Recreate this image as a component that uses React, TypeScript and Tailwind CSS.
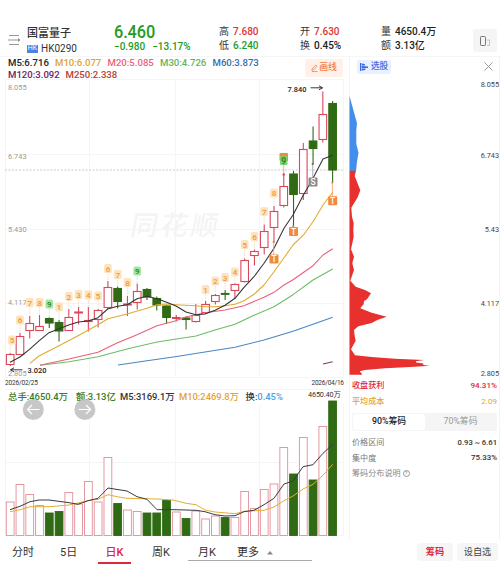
import { X } from "lucide-react";

type Candle = [high: number, top: number, bottom: number, low: number, down?: 1];

const candles: Candle[] = [
  [353, 354.5, 364.5, 366],
  [333, 336.5, 354.5, 355],
  [316, 323.5, 330.5, 338.5],
  [315, 326.5, 330.5, 331],
  [317.5, 318.5, 323, 328, 1],
  [320, 322.5, 331, 341.5, 1],
  [309, 317.5, 330.5, 331],
  [307, 312, 313, 324.5],
  [307, 320.5, 321.5, 331.5],
  [309, 310.5, 319.5, 327.5],
  [281, 287.5, 307.5, 309],
  [286.5, 288.5, 301.5, 308.5, 1],
  [296, 304, 305, 316],
  [283.5, 291.5, 302.5, 309.5],
  [288, 289.5, 297, 300, 1],
  [296.5, 298.5, 305, 310.5, 1],
  [305.5, 306, 317.5, 324, 1],
  [315, 317.5, 318.5, 321.5],
  [316.5, 318, 319.5, 329.5, 1],
  [304, 315.5, 321.5, 322.5],
  [301, 304.5, 312.5, 314],
  [294, 295.5, 301.5, 304.5],
  [290, 293.5, 294.3, 300, 1],
  [283.5, 284.5, 290.5, 298.5],
  [258.5, 260.5, 281.5, 282.5],
  [249.5, 251.5, 255.5, 265.5],
  [224.5, 231.5, 247.5, 254.5],
  [206, 211.5, 227.5, 242],
  [174, 186.5, 205.5, 207.5],
  [171, 174, 194.5, 226.5, 1],
  [143, 149.5, 193.5, 200],
  [126.5, 141, 148.5, 164, 1],
  [91.5, 114.5, 139.5, 142.5],
  [101, 103.5, 170, 182.5, 1],
];

const volumeTops = [
  502, 484.5, 494.5, 505.5, 513, 511.5, 492.5, 504, 481.5, 502, 457.5, 503.5,
  510, 511.5, 513, 513, 500.5, 512, 518.5, 511, 519, 516, 517.5, 517.5, 491.5,
  508.5, 489.5, 484, 447.5, 474, 437.5, 480, 426.5, 401,
];

const markers: { i: number; y: number; n: string; green?: boolean; x?: number }[] = [
  { i: 0, y: 340, n: "5", x: 12 },
  { i: 1, y: 320, n: "6" },
  { i: 2, y: 302.5, n: "7" },
  { i: 3, y: 302.5, n: "8" },
  { i: 4, y: 304, n: "9", green: true },
  { i: 5, y: 307, n: "1" },
  { i: 6, y: 296.5, n: "2" },
  { i: 7, y: 294.5, n: "3" },
  { i: 8, y: 295, n: "4" },
  { i: 9, y: 296, n: "5" },
  { i: 10, y: 268.5, n: "6" },
  { i: 11, y: 274.5, n: "7" },
  { i: 12, y: 282.5, n: "8" },
  { i: 13, y: 271, n: "9", green: true },
  { i: 20, y: 289.5, n: "1" },
  { i: 21, y: 281, n: "2" },
  { i: 22, y: 277.5, n: "3" },
  { i: 23, y: 272, n: "4" },
  { i: 24, y: 244.5, n: "5" },
  { i: 25, y: 236.5, n: "6" },
  { i: 26, y: 211.5, n: "7" },
  { i: 27, y: 193, n: "8" },
];

const trades = [
  { x: 274, y: 259, t: "T", from: 242 },
  { x: 293.5, y: 231.5, t: "T", from: 226 },
  { x: 332.7, y: 200.7, t: "T", from: 182.5 },
  { x: 313, y: 182, t: "S", from: 164 },
];

const averages = [
  { color: "#4a86c4", points: "118,365 147,360.7 175,356.7 205,352 235,347.3 264,340 293,331.3 313,324.3 332.7,317.3" },
  { color: "#6bbd62", points: "40,365.3 69,361.7 98,356.7 127,349 157,342 175,339.3 196,336 215,330 235,324.3 254,315.3 274,306.7 293,294.7 313,280 332.7,269" },
  { color: "#e8607a", points: "40,365.3 69,359 98,352.3 117,343 137,334.7 157,325.7 175,321 186,317 205,312.7 225,310 244,305.7 264,297.3 274,292.3 284,285 293,279.7 313,265.7 323,255 332.7,248.7" },
  { color: "#e0a92e", points: "30,363.3 39,356 59,345.7 78,335.7 98,324.7 108,318.7 127,314 147,308.3 157,304.7 166,304 176,304.7 196,305.7 205,306.7 215,306.7 225,305.7 235,304.3 244,300.7 254,294.3 264,285 274,271.7 284,257.7 293,245 304,234.3 313,221.7 323,205 332.7,192.3" },
  { color: "#333333", points: "10,362.3 20,357 29.5,349.3 39.3,340.7 49,332.7 59,328.7 68.7,325 78.3,322 88,321 98,317.7 107.7,309 117.5,306.3 127.3,304.7 137,298.7 147,296.3 157,298.7 166,302 176,306 186,312 196,314.7 205,314 215,310.3 225,305.3 235,298.3 244,287.3 254,276.7 264,263.3 274,248.3 284,228.3 293,215 303,195.7 313,178.3 323,159 332.7,155.3" },
  { color: "#7a3b62", points: "323,364 332.7,361.7" },
];

const volumeAverages = [
  { color: "#e5ad36", points: "10,511.7 20,509.7 30,506.7 49,506.7 69,505 88,500.7 98,499.3 108,494.7 117,496.7 127,498.3 157,499 173,500 186,503.3 196,504.7 205,510 215,512 235,513.7 244,511.3 264,510.3 274,507 284,500.7 293,496 303,489 313,484.3 323,475.3 332.7,464.3" },
  { color: "#3a3a44", points: "10,509.7 20,506.3 30,501.7 39,500 49,500 69,502.7 78,504.3 88,500.7 98,498.3 108,488 127,491 137,496.7 147,499.3 157,509.7 175,509.7 196,510.3 205,511.7 215,514.7 225,516 235,515.7 244,511.7 254,510.3 264,504.7 274,498.3 284,484 293,481 303,466.7 313,464.7 323,453.3 332.7,444.3" },
];

const legend = [
  { text: "M5:6.716", className: "w-[47px] text-[#222]" },
  { text: "M10:6.077", className: "w-[52.5px] text-[#e0a52f]" },
  { text: "M20:5.085", className: "w-[52.5px] text-[#ee5f7b]" },
  { text: "M30:4.726", className: "w-[52.5px] text-[#62b558]" },
  { text: "M60:3.873", className: "w-[52.5px] text-[#2f6fae]" },
  { text: "M120:3.092", className: "w-[57.5px] text-[#6c2263]" },
  { text: "M250:2.338", className: "w-[60px] text-[#b5402f]" },
];

const volumeLegend = [
  { label: "总手:", value: "4650.4万", className: "w-[68px] text-[#3d7a26]" },
  { label: "额:", value: "3.13亿", className: "w-[44px] text-[#3d7a26]" },
  { label: "M5:", value: "3169.1万", className: "w-[59px] text-[#333]" },
  { label: "M10:", value: "2469.8万", className: "w-[66.5px] text-[#e0a52f]" },
];

const gridX = [5.5, 89.5, 175.5, 259.5, 343.5];
const candleX = (i: number) => 10.2 + i * 9.77;

function Header() {
  return (
    <header className="flex h-[57px] border-b border-[#f6f6f6] pt-[24px] pl-[8px]">
      <svg width="13" height="12" viewBox="0 0 13 12" className="mt-[10px] shrink-0" fill="none" stroke="#8c8c8c">
        <path d="M1 1.5H11M0 6H10M1 10.5H11" strokeWidth="0.9" />
        <path d="M10 4L12.5 6L10 8Z" fill="#8c8c8c" stroke="none" />
      </svg>
      <div className="ml-[6px] w-[87px]">
        <div className="h-[17px] text-[11px] leading-[20px] font-medium text-[#333]">国富量子</div>
        <div className="flex h-[15px] items-center">
          <span className="mr-[3px] flex h-[8px] w-[11px] items-center justify-center bg-[#4584df] text-[7px] text-white">HK</span>
          <span className="text-[10px] text-[#333]">HK0290</span>
        </div>
      </div>
      <div className="w-[105px] text-[#259b24]">
        <div className="h-[15px] w-[50px] origin-center scale-y-115 text-[16.3px] leading-[16px] font-medium tracking-[-0.1px]">6.460</div>
        <div className="flex gap-[7px] pt-px text-[10px] leading-[14px] font-medium">
          <span>−0.980</span>
          <span>−13.17%</span>
        </div>
      </div>
      <Quote rows={[["高", "7.680", "text-[#e03535]"], ["低", "6.240", "text-[#259b24]"]]} className="w-[81px]" />
      <Quote rows={[["开", "7.630", "text-[#e03535]"], ["换", "0.45%", "text-[#222]"]]} className="w-[81px]" />
      <Quote rows={[["量", "4650.4万", "text-[#222]"], ["额", "3.13亿", "text-[#222]"]]} className="w-[92px]" />
      <button className="mt-[5px] flex h-[23px] w-[24px] shrink-0 items-center justify-center rounded-[3px] bg-[#f5f5f5]">
        <svg width="12" height="12" viewBox="0 0 12 12" fill="none" stroke="#777">
          <rect x="1.5" y="1.5" width="5" height="9" rx="0.8" />
          <path d="M8 5H10.5V10.5H8" stroke="#c5c5c5" />
        </svg>
      </button>
    </header>
  );
}

function Quote({ rows, className }: { rows: string[][]; className: string }) {
  return (
    <div className={`shrink-0 ${className}`}>
      {rows.map(([label, value, color]) => (
        <div key={label} className="flex h-[14.5px] items-center gap-[4px] text-[10px] font-medium whitespace-nowrap">
          <span className="font-normal text-[#333]">{label}</span>
          <span className={color}>{value}</span>
        </div>
      ))}
    </div>
  );
}

function CandleChart() {
  return (
    <svg width="345" height="311" viewBox="0 79 345 311" className="block shrink-0">
      <g stroke="#f5f5f5" fill="none">
        {gridX.map((x) => <path key={x} d={`M${x} 79V377`} />)}
        {[79.5, 154.5, 229.5, 303.5, 377.5, 389.5].map((y) => <path key={y} d={`M5 ${y}H344`} />)}
      </g>
      <text x="130" y="235" fontSize="27" fontWeight="500" fill="#f4f4f4" textLength="87" transform="translate(41 0) skewX(-10)">同花顺</text>
      <path d="M5 170H344" stroke="#c4c4c4" strokeDasharray="2 1.5" strokeWidth="0.9" />
      <g fontSize="7.4" fill="#999">
        <text x="8" y="89.5">8.055</text>
        <text x="8" y="158.5">6.743</text>
        <text x="8" y="232">5.430</text>
        <text x="8" y="305">4.117</text>
        <text x="8" y="376">2.805</text>
      </g>

      {markers.map((m) => (
        <path key={m.i} d={`M${candleX(m.i)} ${m.y + 5}V${candles[m.i][0]}`} stroke={m.green ? "#b8e2b5" : "#eecfae"} strokeWidth="0.7" strokeDasharray="1.5 1" />
      ))}
      {candles.map(([high, top, bottom, low, down], i) => {
        const x = candleX(i);
        const color = down ? "#2f6b14" : "#d9475b";
        return (
          <g key={i} stroke={color} strokeWidth="1.1">
            <path d={`M${x} ${high}V${top}M${x} ${bottom}V${low}`} />
            <rect x={x - 3.8} y={top} width="7.6" height={bottom - top} fill={down ? color : "#fff"} />
          </g>
        );
      })}
      {averages.map((a) => (
        <polyline key={a.color} points={a.points} fill="none" stroke={a.color} strokeWidth="1.05" strokeLinejoin="round" />
      ))}

      <path d="M283.7 164V174" stroke="#e69a80" strokeWidth="0.8" />
      <circle cx="283.7" cy="174.5" r="1.2" fill="#d9475b" />
      <rect x="279.5" y="153" width="8.5" height="8" rx="1" fill="#ef8b45" />
      <rect x="280" y="156" width="7.5" height="9" rx="1" fill="#77cf68" fillOpacity="0.9" />
      <text x="283.7" y="163.5" fontSize="8.5" fontWeight="700" fill="#2e8a20" textAnchor="middle">9</text>
      {trades.map((t) => (
        <g key={t.x}>
          <path d={`M${t.x - 0.3} ${t.from}V${t.y - 4}`} stroke={t.t === "S" ? "#999" : "#ef9d5c"} strokeWidth="0.8" />
          <circle cx={t.x - 0.3} cy={t.from} r="1.1" fill={t.t === "S" ? "#666" : "#d6844a"} />
          <rect x={t.x - 4.5} y={t.y - 4.5} width="9" height="9" rx="1" fill={t.t === "S" ? "#8b8b8b" : "#f08a3e"} />
          <text x={t.x} y={t.y + 3} fontSize="8.5" fontWeight="500" fill="#fff" textAnchor="middle">{t.t}</text>
        </g>
      ))}
      {markers.map((m) => (
        <g key={m.i}>
          <rect x={(m.x ?? candleX(m.i)) - 3.8} y={m.y - 4.5} width="7.6" height="9" rx="1.5" fill={m.green ? "#a5e69f" : "#fee3bd"} />
          <text x={m.x ?? candleX(m.i)} y={m.y + 3} fontSize="8" fontWeight="500" fill={m.green ? "#26802b" : "#e89a3c"} textAnchor="middle">{m.n}</text>
        </g>
      ))}

      <g fill="none" stroke="#222" strokeWidth="0.9">
        <path d="M310.5 87.8H322.5M319 85.8L322.5 87.8L319 89.8" />
        <path d="M22.5 369.8H10.5M14 367.8L10.5 369.8L14 371.8" />
      </g>
      <g fontSize="7.4" fontWeight="500" fill="#222">
        <text x="287.5" y="92">7.840</text>
        <text x="27.5" y="372.5">3.020</text>
      </g>
      <g fontSize="6.5" fill="#333">
        <text x="5" y="385" textLength="33">2026/02/25</text>
        <text x="311.5" y="385" textLength="32.5">2026/04/16</text>
      </g>
    </svg>
  );
}

function VolumeChart() {
  return (
    <section className="h-[147px]">
      <div className="flex h-[14px] items-center pl-[8px] text-[9.4px] whitespace-nowrap">
        {volumeLegend.map((v) => (
          <span key={v.label} className={`shrink-0 font-medium ${v.className}`}>{v.label}{v.value}</span>
        ))}
        <span className="w-[62.5px] shrink-0 font-medium text-[#333]">换:<span className="text-[#4ba3dc]">0.45%</span></span>
        <span className="-mt-[4px] text-[7.3px] tracking-[-0.15px] text-[#333]">4650.40万</span>
      </div>
      <svg width="345" height="133" viewBox="0 404 345 133" className="block overflow-visible">
        <g stroke="#f5f5f5" fill="none">
          {gridX.map((x) => <path key={x} d={`M${x} 404V535`} />)}
          <path d="M5 462.5H344M5 535.5H344" />
        </g>
        {volumeTops.map((top, i) => {
          const down = candles[i][4];
          return (
            <rect
              key={i}
              x={candleX(i) - 3.9}
              y={top}
              width="7.8"
              height={535.5 - top}
              fill={down ? "#2f6b14" : "#fff"}
              stroke={down ? "#2f6b14" : "#e28e98"}
              strokeWidth="0.9"
            />
          );
        })}
        {volumeAverages.map((a) => (
          <polyline key={a.color} points={a.points} fill="none" stroke={a.color} strokeWidth="1" />
        ))}
        <g fill="none" stroke="#fff" strokeWidth="1.2">
          <circle cx="33.3" cy="409.5" r="10.5" fill="#bdbdbd" fillOpacity="0.85" stroke="none" />
          <circle cx="84.9" cy="409.5" r="10.5" fill="#bdbdbd" fillOpacity="0.85" stroke="none" />
          <path d="M39.5 409.5H27.5M32 405L27.5 409.5L32 414" />
          <path d="M78.5 409.5H90.5M86 405L90.5 409.5L86 414" />
        </g>
      </svg>
    </section>
  );
}

function ChipPanel() {
  return (
    <aside className="w-[151px] shrink-0 border-x border-[#f4f4f4] font-medium">
      <div className="flex h-[22px] items-center justify-between pr-[3px] pl-[7px]">
        <span className="-mt-[3px] flex h-[14px] w-[34px] items-center gap-[3px] rounded-[2px] bg-[#e9f0ff] pl-[3px] text-[8.6px] whitespace-nowrap text-[#3d68e0]">
          <svg width="8" height="8" viewBox="0 0 8 8" fill="#3d68e0" className="shrink-0">
            <path d="M0 0H1V8H0ZM1.5 0.2L5 1.2V2.5H1.5ZM1.5 2.9L8 3.4V5H1.5ZM1.5 5.4H5.5V6.7L1.5 7.7Z" />
          </svg>
          选股
        </span>
        <X className="-mt-[4px] size-[15px] text-[#888]" strokeWidth={1.3} />
      </div>
      <svg width="149" height="299" viewBox="350 79 149 299" className="block overflow-visible">
        <path d="M349.5 96L357 123.3L356.3 130V144L358.5 152.7L357 161.7L356 171H349.5Z" fill="#438eec" />
        <path
          d="M349.5 170.7H356L354.7 176L360.3 190.3L357.7 197.3L351.3 207.7L352 216.7L353.7 223.3L353.3 230L353.7 236.7L351 249.3L354 256.7L352.3 263.3L354 270L350.3 280.7L355.7 286.7L365 290L371 293.3L367 299.3L364 301L363.7 304L360.3 308.3L371.7 312.7L386.7 316.7L377.3 320L371.7 323L358.3 326.3L354 330L354.7 336L355.7 340.7L351 349.3L355 355.3L371.7 357L395 358.7L424.3 360L416 361.2V362.5L423.3 363.5V365L429.7 365.7L415 366.7L385 368.3L365 370L359.7 371.3L362 374V374.7H349.5Z"
          fill="#e8312e"
        />
        <g fontSize="7.3" fontWeight="400" fill="#444" textAnchor="end">
          <text x="499" y="87">8.055</text>
          <text x="499" y="157.5">6.743</text>
          <text x="499" y="231.5">5.43</text>
          <text x="499" y="305.5">4.117</text>
          <text x="499" y="376">2.805</text>
        </g>
      </svg>
      <div className="pr-[2px] pl-[2px] text-[8.1px]">
        <div className="flex h-[15px] items-center justify-between text-[#e0243f]">
          <span>收盘获利</span>
          <span>94.31%</span>
        </div>
        <div className="flex h-[16px] items-center justify-between text-[#e8a52d]">
          <span>平均成本</span>
          <span className="font-normal">2.09</span>
        </div>
        <div className="mt-[4px] flex h-[18px] rounded-[2px] bg-[#f5f5f5] p-px">
          <span className="flex w-[72px] items-center justify-center rounded-[2px] bg-white text-[8.8px] text-[#222]">90%筹码</span>
          <span className="flex flex-1 items-center justify-center text-[8.8px] font-normal text-[#999]">70%筹码</span>
        </div>
        <div className="mt-[4px] flex h-[15px] items-center justify-between font-normal text-[#777]">
          <span>价格区间</span>
          <span className="text-[7.7px] font-medium text-[#333]">0.93 ~ 6.61</span>
        </div>
        <div className="flex h-[16px] items-center justify-between font-normal text-[#777]">
          <span>集中度</span>
          <span className="text-[7.9px] font-medium text-[#333]">75.33%</span>
        </div>
        <div className="flex h-[15px] items-center gap-[2px] font-normal text-[#888]">
          筹码分布说明
          <span className="flex size-[7px] items-center justify-center rounded-full border-[0.5px] border-[#999] text-[5.5px]">?</span>
        </div>
      </div>
    </aside>
  );
}

function PeriodTabs() {
  return (
    <nav className="flex h-[24px] items-stretch text-[11px] whitespace-nowrap text-[#333]">
      <span className="ml-[12px] w-[48px] leading-[25px]">分时</span>
      <span className="w-[38px] leading-[25px]">5日</span>
      <span className="flex w-[33px] justify-center border-b-2 border-[#e0263a] leading-[25px] font-medium text-[#e0263a]">日K</span>
      <span className="ml-[21px] w-[36px] leading-[25px]">周K</span>
      <div className="flex h-[21px] w-[124px] border-b border-[#aaa]">
        <span className="ml-[10px] w-[39px] leading-[25px]">月K</span>
        <span className="leading-[25px]">更多</span>
        <svg width="6" height="4" viewBox="0 0 6 4" fill="#888" className="mt-[11px] ml-[8px]">
          <path d="M3 0L6 3.5H0Z" />
        </svg>
      </div>
      <div className="ml-[105px] flex gap-[4px] pt-[3px]">
        <button className="h-[18px] w-[36px] rounded-[3px] bg-[#f6f6f6] text-[9.2px] font-bold text-[#e0263a]">筹码</button>
        <button className="h-[18px] w-[41px] rounded-[3px] bg-[#f6f6f6] text-[9.2px] text-[#444]">设自选</button>
      </div>
    </nav>
  );
}

export default function App() {
  return (
    <main className="h-[564px] w-[500px] overflow-hidden bg-white font-[Roboto,'Noto_Sans_CJK_SC',sans-serif]">
      <Header />
      <div className="flex h-[483px]">
        <div className="w-[349px] shrink-0">
          <div className="flex h-[22px]">
            <div className="flex w-[300px] shrink-0 flex-wrap content-start pl-[8px] text-[9.6px] leading-[12px] font-medium">
              {legend.map((l) => (
                <span key={l.text} className={`shrink-0 ${l.className}`}>{l.text}</span>
              ))}
            </div>
            <button className="mt-[2px] ml-[5px] flex h-[18px] w-[38px] items-center justify-center gap-px rounded-[2px] bg-[#fff0e8] text-[8.8px] font-medium text-[#ee8150]">
              <svg width="7" height="8" viewBox="0 0 7 8" fill="none" stroke="#ee8150" strokeWidth="0.8">
                <path d="M1 5L4.8 1L6 2.2L2.5 6L0.8 6.3ZM1 7.5H6.5" />
              </svg>
              画线
            </button>
          </div>
          <CandleChart />
          <VolumeChart />
        </div>
        <ChipPanel />
      </div>
      <PeriodTabs />
    </main>
  );
}
